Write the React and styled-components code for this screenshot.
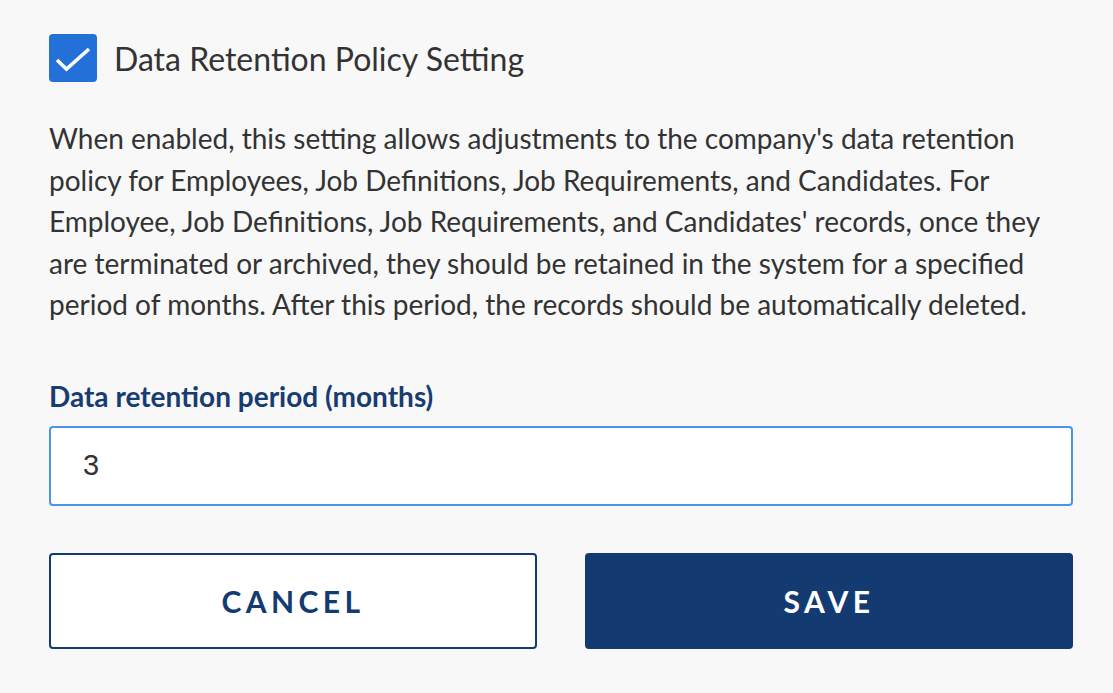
import React, { useState } from "react";
import styled, { createGlobalStyle } from "styled-components";

const GlobalStyle = createGlobalStyle`
  html, body {
    margin: 0;
    padding: 0;
    background: #f8f8f8;
  }
  body {
    font-family: Lato, "Open Sans", sans-serif;
    color: #333333;
  }
`;

const Panel = styled.div`
  padding: 34px 40px 0 49px;
  display: flex;
  flex-direction: column;
`;

const CheckRow = styled.label`
  display: flex;
  align-items: center;
  gap: 17px;
  cursor: pointer;
`;

const CheckBox = styled.span`
  width: 48px;
  height: 48px;
  border-radius: 4px;
  background: ${(p) => (p.checked ? "#2370d9" : "#ffffff")};
  border: ${(p) => (p.checked ? "none" : "2px solid #999")};
  box-sizing: border-box;
  display: flex;
  align-items: center;
  justify-content: center;
  flex-shrink: 0;
`;

const CheckTitle = styled.span`
  font-size: 32px;
  color: #333333;
  line-height: 1.2;
  margin-top: 3px;
`;

const Description = styled.p`
  margin: 36px 0 0;
  width: 1024px;
  font-size: 28px;
  line-height: 41.6px;
  color: #333333;
`;

const FieldLabel = styled.div`
  margin-top: 54px;
  font-size: 28px;
  font-weight: 700;
  line-height: 1.2;
  color: #173c70;
`;

const Input = styled.input`
  margin-top: 12px;
  width: 1024px;
  height: 80px;
  box-sizing: border-box;
  border: 2px solid #4b93ee;
  border-radius: 4px;
  background: #ffffff;
  padding: 0 32px;
  font-family: "Liberation Sans", Arial, sans-serif;
  font-size: 29px;
  color: #333333;
  outline: none;
`;

const Actions = styled.div`
  margin-top: 47px;
  width: 1024px;
  display: grid;
  grid-template-columns: 1fr 1fr;
  gap: 48px;
`;

const Button = styled.button`
  height: 96px;
  box-sizing: border-box;
  border-radius: 4px;
  border: 2px solid #133b72;
  background: ${(p) => (p.primary ? "#133b72" : "#ffffff")};
  color: ${(p) => (p.primary ? "#ffffff" : "#133b72")};
  font-family: Lato, sans-serif;
  font-weight: 700;
  font-size: 30px;
  letter-spacing: 4.4px;
  text-transform: uppercase;
  cursor: pointer;
`;

function App() {
  const [enabled, setEnabled] = useState(true);
  const [months, setMonths] = useState("3");

  return (
    <>
      <GlobalStyle />
      <Panel>
        <CheckRow onClick={() => setEnabled(!enabled)}>
          <CheckBox checked={enabled}>
            {enabled && (
              <svg width="48" height="48" viewBox="0 0 48 48">
                <path
                  d="M8 26 L17.5 35 L40 15"
                  fill="none"
                  stroke="#ffffff"
                  strokeWidth="3.6"
                />
              </svg>
            )}
          </CheckBox>
          <CheckTitle>Data Retention Policy Setting</CheckTitle>
        </CheckRow>

        <Description>
          When enabled, this setting allows adjustments to the company's data
          retention policy for Employees, Job Definitions, Job Requirements,
          and Candidates. For Employee, Job Definitions, Job Requirements, and
          Candidates' records, once they are terminated or archived, they
          should be retained in the system for a specified period of months.
          After this period, the records should be automatically deleted.
        </Description>

        <FieldLabel>Data retention period (months)</FieldLabel>
        <Input value={months} onChange={(e) => setMonths(e.target.value)} />

        <Actions>
          <Button>Cancel</Button>
          <Button primary>Save</Button>
        </Actions>
      </Panel>
    </>
  );
}

export default App;
